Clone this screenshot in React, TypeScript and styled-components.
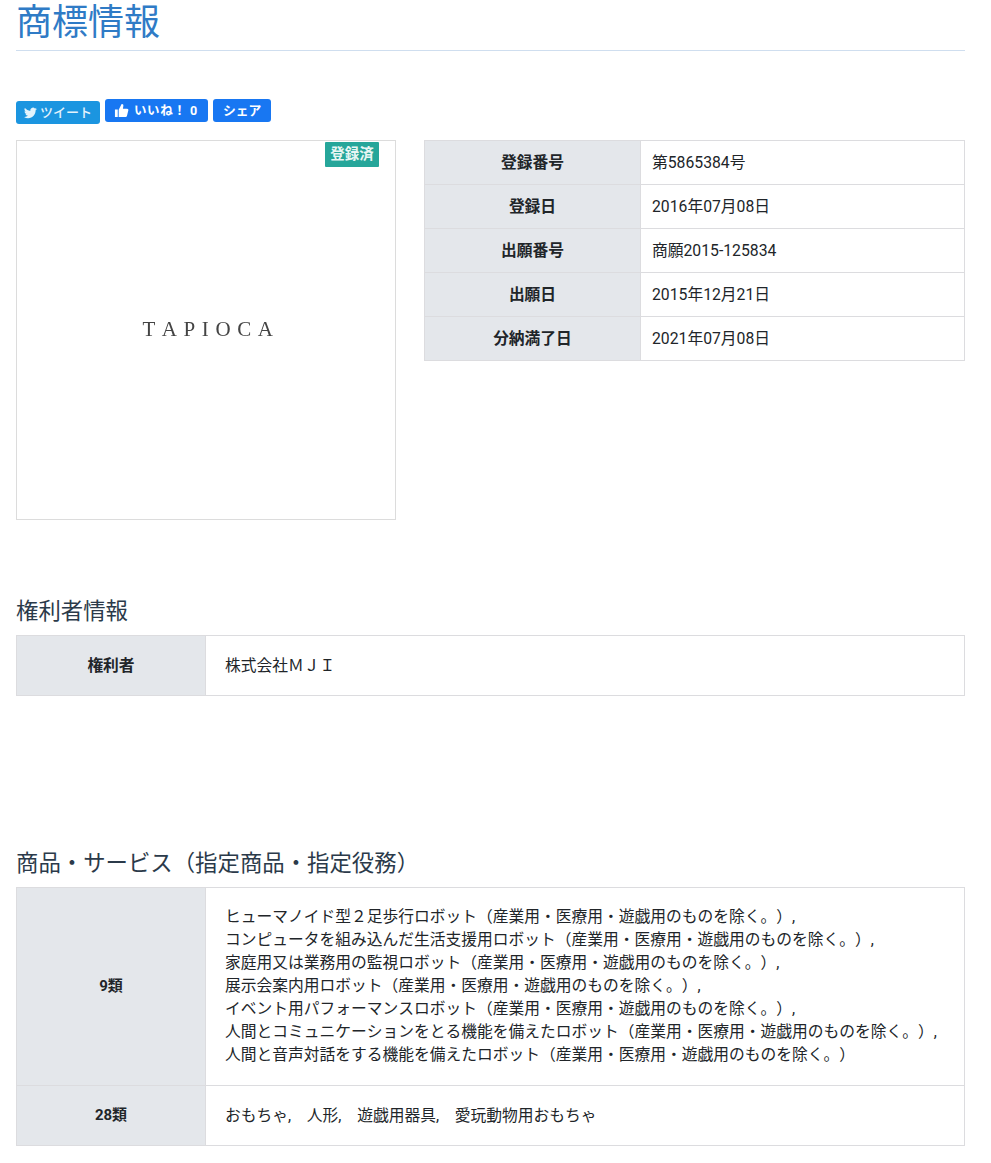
import React from "react";
import styled, { createGlobalStyle } from "styled-components";

const Global = createGlobalStyle`
  html, body { margin: 0; padding: 0; background: #fff; }
  body {
    font-family: Roboto, "Noto Sans CJK JP", sans-serif;
    font-size: 15.75px;
    line-height: 23px;
    color: #212529;
    text-spacing-trim: space-all;
    font-kerning: none;
  }
`;

const Page = styled.div`
  padding: 0 26px 0 16px;
  width: 949px;
  height: 1163px;
  overflow: hidden;
  box-sizing: content-box;
`;

const Title = styled.h1`
  margin: 0;
  height: 50px;
  border-bottom: 1px solid #cfdeef;
  font-size: 36px;
  line-height: 46px;
  font-weight: 400;
  color: #2f7bc6;
`;

const ShareBar = styled.div`
  display: flex;
  align-items: flex-start;
  gap: 5px;
  margin-top: 48px;
  height: 41px;
`;

const ShareButton = styled.span<{ $bg: string; $top?: number }>`
  display: inline-flex;
  align-items: center;
  gap: 5px;
  height: 23px;
  padding: 0 10px 0 9px;
  margin-top: ${(p) => p.$top ?? 0}px;
  border-radius: 3px;
  background: ${(p) => p.$bg};
  color: #fff;
  font-size: 12.5px;
  font-weight: 700;
  line-height: 23px;
  white-space: nowrap;
`;

const ShareOnly = styled(ShareButton)`
  font-size: 12.8px;
  padding: 0 10px;
`;

const TweetButton = styled(ShareButton)`
  font-weight: 500;
  font-size: 13px;
  color: #e4f3fc;
  gap: 3px;
  padding: 0 8px 0 8px;
  width: 84px;
  box-sizing: border-box;
`;

const LikeLabel = styled.span`
  letter-spacing: 0.6px;
`;

const TopRow = styled.div`
  display: flex;
  gap: 28px;
  align-items: flex-start;
`;

const LogoBox = styled.div`
  position: relative;
  flex: none;
  width: 378px;
  height: 378px;
  border: 1px solid #dcdcdc;
  display: flex;
  align-items: center;
  justify-content: center;
`;

const LogoText = styled.span`
  font-family: "Liberation Serif", serif;
  font-size: 21px;
  letter-spacing: 6.6px;
  line-height: 24px;
  color: #444;
  margin: -2px 0 0 10px;
  filter: blur(0.3px);
`;

const StatusBadge = styled.span`
  position: absolute;
  top: 1px;
  right: 16px;
  width: 54px;
  height: 25px;
  border-radius: 1px;
  background: #26a69a;
  color: #e8f6f4;
  font-size: 14.5px;
  font-weight: 700;
  line-height: 25px;
  text-align: center;
`;

const Table = styled.table`
  border-collapse: collapse;
  table-layout: fixed;
  width: 100%;
`;

const InfoWrap = styled.div`
  flex: 1;
`;

const Head = styled.th<{ $w: number }>`
  width: ${(p) => p.$w}px;
  background: #e4e7eb;
  border: 1px solid #dcdcdf;
  font-weight: 700;
  text-align: center;
  padding: 0;
`;

const Cell = styled.td`
  border: 1px solid #dcdcdf;
  padding: 0 11px;
`;

const InfoRow = styled.tr`
  height: 44px;
`;

const SectionTitle = styled.h2<{ $top: number }>`
  margin: ${(p) => p.$top}px 0 0;
  height: 40px;
  font-size: 22.4px;
  line-height: 32px;
  font-weight: 400;
  color: #2b3a4a;
`;

const WideHead = styled(Head)`
  font-size: 15px;
`;

const WideCell = styled(Cell)`
  padding: 17px 19px 19px;
`;

const ShortCell = styled(Cell)`
  padding: 0 19px;
  height: 59px;
`;

const GoodsLine = styled.div`
  white-space: nowrap;
`;

const TwitterIcon = () => (
  <svg width="14" height="12" viewBox="0 0 24 20" fill="currentColor">
    <path d="M24 2.4a9.8 9.8 0 0 1-2.8.8A4.9 4.9 0 0 0 23.3.5a9.8 9.8 0 0 1-3.1 1.2 4.9 4.9 0 0 0-8.4 4.5A14 14 0 0 1 1.7.9a4.9 4.9 0 0 0 1.5 6.6 4.9 4.9 0 0 1-2.2-.6 4.9 4.9 0 0 0 3.9 4.9 4.9 4.9 0 0 1-2.2.1 4.9 4.9 0 0 0 4.6 3.4A9.9 9.9 0 0 1 0 17.3 14 14 0 0 0 7.5 19.5c9.1 0 14.3-7.7 14-14.6A10 10 0 0 0 24 2.4z" />
  </svg>
);

const ThumbIcon = () => (
  <svg width="15" height="15" viewBox="0 0 16 16" fill="currentColor">
    <path d="M1 7h3v8H1zM5 7.2 8 1.2c1.3-.4 2.2.5 2 1.8L9.5 6H14c1 0 1.5.9 1.3 1.7l-1.5 6.2c-.2.7-.7 1.1-1.4 1.1H5z" />
  </svg>
);

const info: [string, string][] = [
  ["登録番号", "第5865384号"],
  ["登録日", "2016年07月08日"],
  ["出願番号", "商願2015-125834"],
  ["出願日", "2015年12月21日"],
  ["分納満了日", "2021年07月08日"],
];

const goods = [
  "ヒューマノイド型２足歩行ロボット（産業用・医療用・遊戯用のものを除く。）,",
  "コンピュータを組み込んだ生活支援用ロボット（産業用・医療用・遊戯用のものを除く。）,",
  "家庭用又は業務用の監視ロボット（産業用・医療用・遊戯用のものを除く。）,",
  "展示会案内用ロボット（産業用・医療用・遊戯用のものを除く。）,",
  "イベント用パフォーマンスロボット（産業用・医療用・遊戯用のものを除く。）,",
  "人間とコミュニケーションをとる機能を備えたロボット（産業用・医療用・遊戯用のものを除く。）,",
  "人間と音声対話をする機能を備えたロボット（産業用・医療用・遊戯用のものを除く。）",
];

export default function App() {
  return (
    <Page>
      <Global />
      <Title>商標情報</Title>
      <ShareBar>
        <TweetButton $bg="#1b95e0" $top={2}>
          <TwitterIcon />
          ツイート
        </TweetButton>
        <ShareButton $bg="#1877f2">
          <ThumbIcon />
          <LikeLabel>いいね！ 0</LikeLabel>
        </ShareButton>
        <ShareOnly $bg="#1877f2">シェア</ShareOnly>
      </ShareBar>
      <TopRow>
        <LogoBox>
          <LogoText>TAPIOCA</LogoText>
          <StatusBadge>登録済</StatusBadge>
        </LogoBox>
        <InfoWrap>
          <Table>
            <tbody>
              {info.map(([k, v]) => (
                <InfoRow key={k}>
                  <Head $w={215}>{k}</Head>
                  <Cell>{v}</Cell>
                </InfoRow>
              ))}
            </tbody>
          </Table>
        </InfoWrap>
      </TopRow>
      <SectionTitle $top={75}>権利者情報</SectionTitle>
      <Table>
        <tbody>
          <tr>
            <Head $w={188}>権利者</Head>
            <ShortCell>株式会社ＭＪＩ</ShortCell>
          </tr>
        </tbody>
      </Table>
      <SectionTitle $top={151}>商品・サービス（指定商品・指定役務）</SectionTitle>
      <Table>
        <tbody>
          <tr>
            <WideHead $w={188}>9類</WideHead>
            <WideCell>
              {goods.map((g) => (
                <GoodsLine key={g}>{g}</GoodsLine>
              ))}
            </WideCell>
          </tr>
          <tr>
            <WideHead $w={188}>28類</WideHead>
            <ShortCell>おもちゃ,　人形,　遊戯用器具,　愛玩動物用おもちゃ</ShortCell>
          </tr>
        </tbody>
      </Table>
    </Page>
  );
}
